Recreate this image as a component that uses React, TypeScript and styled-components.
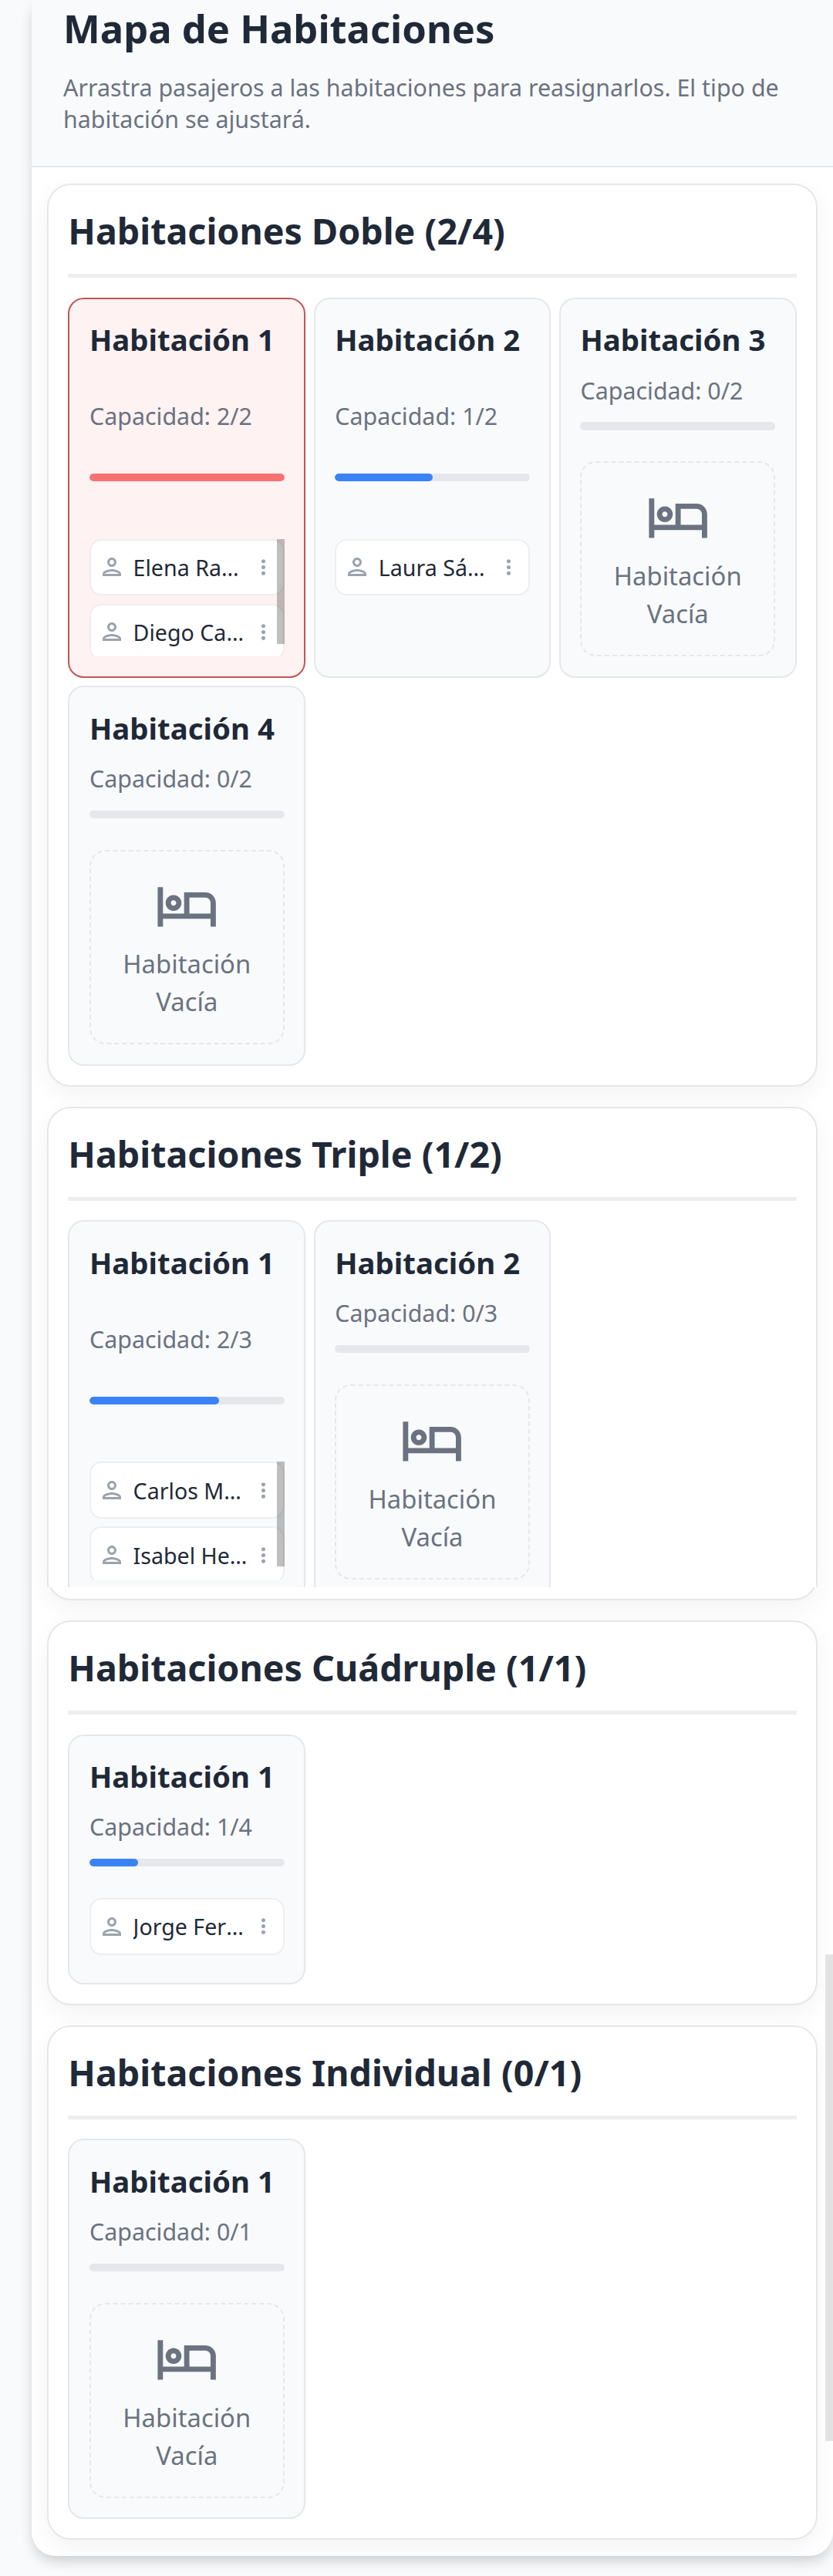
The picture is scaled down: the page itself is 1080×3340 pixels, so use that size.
import React from "react";
import styled, { createGlobalStyle, css } from "styled-components";

const GlobalStyle = createGlobalStyle`
  *, *::before, *::after { box-sizing: border-box; }
  html, body { margin: 0; padding: 0; }
  body {
    background: #f9fafc;
    color: #1f2937;
    font-family: "Noto Sans", "Open Sans", sans-serif;
  }
  h1, h2, h3, p { margin: 0; }
`;

const Page = styled.div`
  position: relative;
  width: 1080px;
  height: 3340px;
  padding-left: 41px;
  overflow: hidden;
  background: #f9fafc;
`;

const Panel = styled.main`
  height: 3314px;
  background: #ffffff;
  border-radius: 0 0 31px 31px;
  box-shadow: 0 10px 16px -2.6px rgba(0, 0, 0, 0.1), 0 5px 22px -5px rgba(0, 0, 0, 0.12);
`;

const PanelHeader = styled.header`
  height: 217px;
  padding: 2px 41px 0;
  background: #f9fafc;
  border-bottom: 2px solid #e5e7eb;
`;

const PanelTitle = styled.h1`
  font-size: 50.7px;
  line-height: 70px;
  font-weight: 700;
`;

const PanelText = styled.p`
  margin-top: 22px;
  font-size: 30.4px;
  line-height: 40.7px;
  color: #6b7280;
`;

const SectionList = styled.div`
  display: flex;
  flex-direction: column;
  gap: 26px;
  padding: 20.9px 20px;
`;

const Section = styled.section<{ $cropped?: boolean }>`
  position: relative;
  isolation: isolate;
  display: flex;
  flex-direction: column;
  padding: 26.5px 25.3px 0;
  background: #ffffff;
  border: 2px solid #e5e7eb;
  border-radius: 31px;
  box-shadow: 0 10px 31px rgba(0, 0, 0, 0.05);

  ${(p) =>
    p.$cropped &&
    css`
      &::before {
        content: "";
        position: absolute;
        z-index: -1;
        left: -2px;
        right: -2px;
        bottom: 15px;
        height: 18px;
        background: #ffffff;
        border: solid #e5e7eb;
        border-width: 0 2px;
      }
    `}
`;

const SectionTitle = styled.h2`
  padding-bottom: 22.5px;
  margin-bottom: 25.8px;
  border-bottom: 5px solid #eeeeee;
  font-size: 46.6px;
  line-height: 66px;
  font-weight: 700;
`;

const RoomGrid = styled.div<{ $height?: number }>`
  display: grid;
  grid-template-columns: repeat(3, minmax(0, 1fr));
  gap: 10.3px;
  align-items: stretch;
  margin-bottom: ${(p) => (p.$height ? 14.6 : 24.7)}px;
  height: ${(p) => (p.$height ? `${p.$height}px` : "auto")};
  overflow: ${(p) => (p.$height ? "hidden" : "visible")};
`;

const Room = styled.article<{ $full: boolean; $tall: boolean }>`
  display: flex;
  flex-direction: column;
  justify-content: space-between;
  min-height: ${(p) => (p.$tall ? "493px" : "0")};
  padding: 25.7px;
  border: 2px solid ${(p) => (p.$full ? "#c45454" : "#e5e7eb")};
  border-radius: 20.6px;
  background: ${(p) => (p.$full ? "#fef2f2" : "#f9fafc")};
`;

const RoomName = styled.h3`
  margin-bottom: 15.8px;
  font-size: 38.4px;
  line-height: 54.3px;
  font-weight: 700;
  white-space: nowrap;
`;

const RoomCapacity = styled.p`
  margin-bottom: 17.2px;
  font-size: 30.4px;
  line-height: 46.3px;
  color: #6b7280;
`;

const Meter = styled.div`
  flex: none;
  height: 10.3px;
  margin-bottom: 40.8px;
  border-radius: 5.2px;
  background: #e5e7eb;
  overflow: hidden;
`;

const MeterFill = styled.div<{ $full: boolean }>`
  height: 100%;
  border-radius: 5.2px;
  background: ${(p) => (p.$full ? "#f87171" : "#3b82f6")};
`;

const GuestArea = styled.div<{ $tall: boolean }>`
  position: relative;
  flex: none;
  height: ${(p) => (p.$tall ? 152.5 : 84.3)}px;
  overflow: hidden;
`;

const ScrollThumb = styled.span`
  position: absolute;
  top: 0;
  right: 0;
  width: 10px;
  height: 136px;
  background: rgba(0, 0, 0, 0.25);
`;

const Guest = styled.div`
  display: flex;
  align-items: center;
  height: 73.6px;
  margin-bottom: 10.6px;
  padding: 0 10px 0 9px;
  border: 2px solid #eeeeee;
  border-radius: 15.4px;
  background: #ffffff;
  color: #9ca3af;

  svg { flex: none; display: block; }
`;

const GuestName = styled.span`
  flex: 1;
  min-width: 0;
  margin: 0 4px 0 9.6px;
  overflow: hidden;
  text-overflow: ellipsis;
  font-size: 28.6px;
  white-space: nowrap;
  color: #1f2937;
`;

const EmptyRoom = styled.div`
  flex: none;
  display: flex;
  flex-direction: column;
  align-items: center;
  justify-content: center;
  gap: 10.3px;
  height: 252.5px;
  border: 2px dashed #e5e7eb;
  border-radius: 20.6px;
  color: #6b7280;
  text-align: center;
  font-size: 32.8px;
  line-height: 49.2px;

  svg { display: block; }
  span { width: 180px; }
`;

const PageThumb = styled.div`
  position: absolute;
  top: 2534px;
  right: 0;
  width: 10px;
  height: 631px;
  background: #e3e3e3;
`;

const PersonIcon = () => (
  <svg width="36" height="36" viewBox="0 0 24 24" fill="currentColor">
    <path d="M12 6c1.1 0 2 .9 2 2s-.9 2-2 2-2-.9-2-2 .9-2 2-2m0 10c2.7 0 5.8 1.29 6 2H6c.23-.72 3.31-2 6-2m0-12C9.79 4 8 5.79 8 8s1.79 4 4 4 4-1.79 4-4-1.79-4-4-4zm0 10c-2.67 0-8 1.34-8 4v2h16v-2c0-2.66-5.33-4-8-4z" />
  </svg>
);

const MoreIcon = () => (
  <svg width="31" height="31" viewBox="0 0 24 24" fill="currentColor">
    <path d="M12 8c1.1 0 2-.9 2-2s-.9-2-2-2-2 .9-2 2 .9 2 2 2zm0 2c-1.1 0-2 .9-2 2s.9 2 2 2 2-.9 2-2-.9-2-2-2zm0 6c-1.1 0-2 .9-2 2s.9 2 2 2 2-.9 2-2-.9-2-2-2z" />
  </svg>
);

const BedIcon = () => (
  <svg width="82.3" height="82.3" viewBox="0 0 24 24" fill="currentColor">
    <path d="M7 14c1.66 0 3-1.34 3-3S8.66 8 7 8s-3 1.34-3 3 1.34 3 3 3zm0-4c.55 0 1 .45 1 1s-.45 1-1 1-1-.45-1-1 .45-1 1-1zm12-3h-8v8H3V5H1v15h2v-3h18v3h2v-9c0-2.21-1.79-4-4-4zm2 8h-8V9h6c1.1 0 2 .9 2 2v4z" />
  </svg>
);

type RoomData = { capacity: number; guests: string[] };
type Group = { type: string; rooms: RoomData[]; visibleHeight?: number };

const groups: Group[] = [
  {
    type: "Doble",
    rooms: [
      { capacity: 2, guests: ["Elena Ramírez", "Diego Castro"] },
      { capacity: 2, guests: ["Laura Sánchez"] },
      { capacity: 2, guests: [] },
      { capacity: 2, guests: [] },
    ],
  },
  {
    type: "Triple",
    visibleHeight: 475.7,
    rooms: [
      { capacity: 3, guests: ["Carlos Mendoza", "Isabel Herrera"] },
      { capacity: 3, guests: [] },
    ],
  },
  { type: "Cuádruple", rooms: [{ capacity: 4, guests: ["Jorge Fernández"] }] },
  { type: "Individual", rooms: [{ capacity: 1, guests: [] }] },
];

function RoomCard({ room, index, tall }: { room: RoomData; index: number; tall: boolean }) {
  const used = room.guests.length;
  const full = used === room.capacity;
  return (
    <Room $full={full} $tall={tall}>
      <RoomName>Habitación {index + 1}</RoomName>
      <RoomCapacity>
        Capacidad: {used}/{room.capacity}
      </RoomCapacity>
      <Meter>
        <MeterFill $full={full} style={{ width: `${(used / room.capacity) * 100}%` }} />
      </Meter>
      {used > 0 ? (
        <GuestArea $tall={tall}>
          {room.guests.map((name) => (
            <Guest key={name}>
              <PersonIcon />
              <GuestName>{name}</GuestName>
              <MoreIcon />
            </Guest>
          ))}
          {used > 1 && <ScrollThumb />}
        </GuestArea>
      ) : (
        <EmptyRoom>
          <BedIcon />
          <span>Habitación Vacía</span>
        </EmptyRoom>
      )}
    </Room>
  );
}

export default function App() {
  return (
    <>
      <GlobalStyle />
      <Page>
        <Panel>
          <PanelHeader>
            <PanelTitle>Mapa de Habitaciones</PanelTitle>
            <PanelText>
              Arrastra pasajeros a las habitaciones para reasignarlos. El tipo de habitación se ajustará.
            </PanelText>
          </PanelHeader>
          <SectionList>
            {groups.map((group) => {
              const occupied = group.rooms.filter((r) => r.guests.length > 0).length;
              const tall = group.rooms.some((r) => r.guests.length === 0);
              return (
                <Section key={group.type} $cropped={!!group.visibleHeight}>
                  <SectionTitle>
                    Habitaciones {group.type} ({occupied}/{group.rooms.length})
                  </SectionTitle>
                  <RoomGrid $height={group.visibleHeight}>
                    {group.rooms.map((room, i) => (
                      <RoomCard key={i} room={room} index={i} tall={tall} />
                    ))}
                  </RoomGrid>
                </Section>
              );
            })}
          </SectionList>
        </Panel>
        <PageThumb />
      </Page>
    </>
  );
}
